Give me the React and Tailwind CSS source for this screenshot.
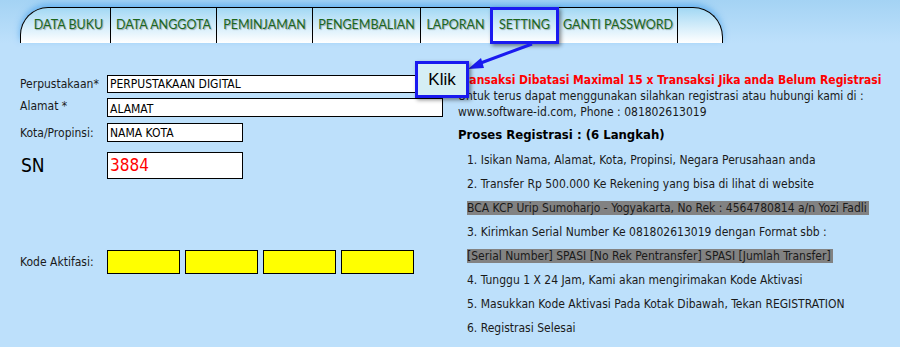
import React from 'react';

const tabs = [
  { label: 'DATA BUKU', w: 'w-[90px]' },
  { label: 'DATA ANGGOTA', w: 'w-[106px]' },
  { label: 'PEMINJAMAN', w: 'w-[96px]' },
  { label: 'PENGEMBALIAN', w: 'w-[108px]' },
  { label: 'LAPORAN', w: 'w-[70px]' },
  { label: 'SETTING', w: 'w-[68px]' },
  { label: 'GANTI PASSWORD', w: 'w-[119px]' },
];

const tahoma = { fontFamily: '"DejaVu Sans Condensed", "DejaVu Sans", sans-serif' };

function Field({ label, width, height, className = '', children, labelClass = '' }) {
  return (
    <div className={`flex items-center ${className}`}>
      <div className={`w-[87px] shrink-0 text-[12px] text-[#1a1a1a] ${labelClass}`}>{label}</div>
      <div className={`${width} ${height} border border-black bg-white flex items-center pl-[2px] text-[12px] text-black`}>
        {children}
      </div>
    </div>
  );
}

export default function App() {
  return (
    <div className="relative w-[900px] h-[347px] overflow-hidden bg-[#bde0fb]" style={tahoma}>
      {/* Tab bar */}
      <div className="h-[43px] pt-[7px] pl-[20px] bg-gradient-to-b from-[#a4d3f4] to-[#bde0fb]">
        <div className="flex w-[703px] h-[36px] border-t border-x border-black rounded-tl-[28px] rounded-tr-[30px] bg-gradient-to-b from-[#a2d8f4] to-white shadow-[0_-3px_6px_rgba(50,150,235,0.55)]">
          {tabs.map((t, i) => (
            <div
              key={t.label}
              className={`${t.w} shrink-0 h-full border-r border-black flex items-center justify-center text-[12.5px] text-[#1c661c] [text-shadow:1px_1px_1px_rgba(0,0,0,0.3)] ${i === 0 ? 'pl-[6px]' : ''}`}
              style={{ fontFamily: 'Lato, "Open Sans", sans-serif' }}
            >
              {t.label}
            </div>
          ))}
          <div className="flex-1" />
        </div>
      </div>

      <div className="flex">
        {/* Left form */}
        <div className="w-[458px] shrink-0 pl-[20px] pt-[32px]">
          <Field label="Perpustakaan*" width="w-[336px]" height="h-[18px]">PERPUSTAKAAN DIGITAL</Field>
          <Field label="Alamat *" width="w-[336px]" height="h-[19px]" className="mt-[5px] !items-start" labelClass="-mt-[1px]">
            <span className="mt-[2px]">ALAMAT</span>
          </Field>
          <Field label="Kota/Propinsi:" width="w-[136px]" height="h-[19px]" className="mt-[6px]">NAMA KOTA</Field>
          <Field label="SN" width="w-[136px]" height="h-[27px]" className="mt-[9px]" labelClass="!text-[19px] !text-black pl-[1px]">
            <span className="text-[17px] text-[#ff0000]">3884</span>
          </Field>
          <div className="flex items-center mt-[70px]">
            <div className="w-[87px] shrink-0 text-[12px] text-[#1a1a1a]">Kode Aktifasi:</div>
            <div className="flex gap-[5px]">
              <div className="w-[73px] h-[24px] border border-black bg-[#ffff00]" />
              <div className="w-[73px] h-[24px] border border-black bg-[#ffff00]" />
              <div className="w-[73px] h-[24px] border border-black bg-[#ffff00]" />
              <div className="w-[73px] h-[24px] border border-black bg-[#ffff00]" />
            </div>
          </div>
        </div>

        {/* Right info */}
        <div className="pt-[29px] text-[12px] text-[#1a1a1a] leading-[16px]">
          <div className="text-[#ff0000] font-bold">Transaksi Dibatasi Maximal 15 x Transaksi Jika anda Belum Registrasi</div>
          <div>Untuk terus dapat menggunakan silahkan registrasi atau hubungi kami di :</div>
          <div>www.software-id.com, Phone : 081802613019</div>
          <div className="font-bold text-[13px] mt-[7px] text-black">Proses Registrasi : (6 Langkah)</div>
          <div className="pl-[9px] mt-[9px] flex flex-col gap-[8px]">
            <div>1. Isikan Nama, Alamat, Kota, Propinsi, Negara Perusahaan anda</div>
            <div>2. Transfer Rp 500.000 Ke Rekening yang bisa di lihat di website</div>
            <div><span className="bg-[#828282] pr-[2px]">BCA KCP Urip Sumoharjo - Yogyakarta, No Rek : 4564780814 a/n Yozi Fadli</span></div>
            <div>3. Kirimkan Serial Number Ke 081802613019 dengan Format sbb :</div>
            <div><span className="bg-[#828282] pr-[2px]">[Serial Number] SPASI [No Rek Pentransfer] SPASI [Jumlah Transfer]</span></div>
            <div>4. Tunggu 1 X 24 Jam, Kami akan mengirimakan Kode Aktivasi</div>
            <div>5. Masukkan Kode Aktivasi Pada Kotak Dibawah, Tekan REGISTRATION</div>
            <div>6. Registrasi Selesai</div>
          </div>
        </div>
      </div>

      {/* Highlight around SETTING tab */}
      <div className="absolute left-[490px] top-[7px] w-[69px] h-[37px] border-[3px] border-[#1a1af0] shadow-[2px_2px_4px_rgba(0,0,0,0.45)]" />

      {/* Arrow */}
      <svg className="absolute left-0 top-0 pointer-events-none" width="900" height="347">
        <line x1="532" y1="44" x2="478" y2="64" stroke="#1a1af0" strokeWidth="3" />
        <polygon points="468,69 481,58 484,68" fill="#1a1af0" />
      </svg>

      {/* Klik callout */}
      <div
        className="absolute left-[415px] top-[61px] w-[54px] h-[37px] bg-[#d5eef5] border-[3px] border-[#1a1af0] shadow-[2px_2px_4px_rgba(0,0,0,0.45)] flex items-center justify-center text-[17px] text-black"
        style={{ fontFamily: '"Liberation Sans", Arial, sans-serif' }}
      >
        Klik
      </div>
    </div>
  );
}
